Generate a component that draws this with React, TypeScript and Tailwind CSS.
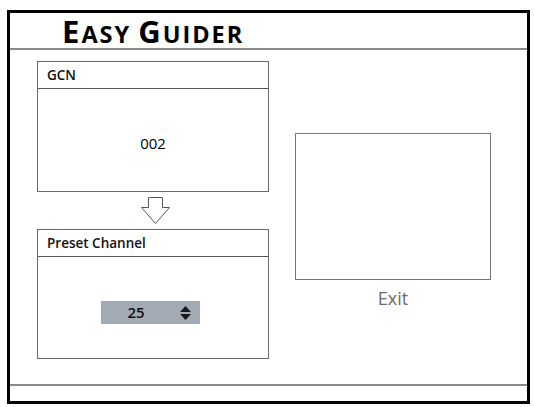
import React from "react";

function DownArrow() {
  return (
    <svg width="30" height="28" viewBox="0 0 30 28" className="block">
      <path
        d="M7.5 0.5 H21.5 V10.5 H28.5 L14.5 26.5 L0.5 10.5 H7.5 Z"
        fill="white"
        stroke="#555"
        strokeWidth="1"
      />
    </svg>
  );
}

function SortIcon() {
  return (
    <svg width="11" height="14" viewBox="0 0 11 14" className="block">
      <path d="M5.5 0 L11 6 H0 Z" fill="#1a1a1a" />
      <path d="M0 8 H11 L5.5 14 Z" fill="#1a1a1a" />
    </svg>
  );
}

export default function App() {
  const font = { fontFamily: '"Open Sans", "Noto Sans", sans-serif' };
  return (
    <div className="w-[534px] h-[407px] bg-white overflow-hidden" style={font}>
      <div className="ml-[7px] mt-[10px] w-[523px] h-[394px] border-[3px] border-black flex flex-col">
        {/* Title */}
        <div className="h-[37px] border-b-[2px] border-[#8a8a8a] flex items-end pl-[52px]">
          <div className="font-bold text-black leading-none mb-[1px] flex items-baseline tracking-[2px]">
            <span className="text-[31px]">E</span>
            <span className="text-[23.5px]">ASY</span>
            <span className="text-[31px] ml-[7px]">G</span>
            <span className="text-[23.5px]">UIDER</span>
          </div>
        </div>
        {/* Main */}
        <div className="flex-1 flex pl-[27px] pt-[11px]">
          <div className="w-[232px] flex flex-col">
            <div className="h-[131px] border-[1.5px] border-[#6a6a6a] flex flex-col">
              <div className="h-[27px] border-b-[1.5px] border-[#555] flex items-center pl-[9px] text-[13.5px] font-semibold text-[#111]">
                GCN
              </div>
              <div className="flex-1 flex items-center justify-center text-[15px] font-medium text-black pt-[6px]">
                002
              </div>
            </div>
            <div className="h-[37px] flex items-center justify-center pl-[6px]">
              <DownArrow />
            </div>
            <div className="h-[130px] border-[1.5px] border-[#6a6a6a] flex flex-col">
              <div className="h-[27px] border-b-[1.5px] border-[#555] flex items-center pl-[9px] text-[13.5px] font-semibold text-[#111]">
                Preset Channel
              </div>
              <div className="flex-1 flex items-center justify-center pt-[10px] pr-[5px]">
                <div className="w-[99px] h-[23px] bg-[#a2abb5] flex items-center">
                  <span className="ml-[23px] w-[24px] text-center text-[15px] font-semibold text-[#111]">25</span>
                  <span className="ml-[32px]">
                    <SortIcon />
                  </span>
                </div>
              </div>
            </div>
          </div>
          <div className="ml-[26px] pt-[72px] flex flex-col items-center">
            <div className="w-[196px] h-[147px] border-[1.5px] border-[#777]" />
            <div className="mt-[9px] text-[18px] text-[#6b6b6b] leading-none">Exit</div>
          </div>
        </div>
        {/* Footer */}
        <div className="h-[17px] border-t-[2px] border-[#8a8a8a]" />
      </div>
    </div>
  );
}
